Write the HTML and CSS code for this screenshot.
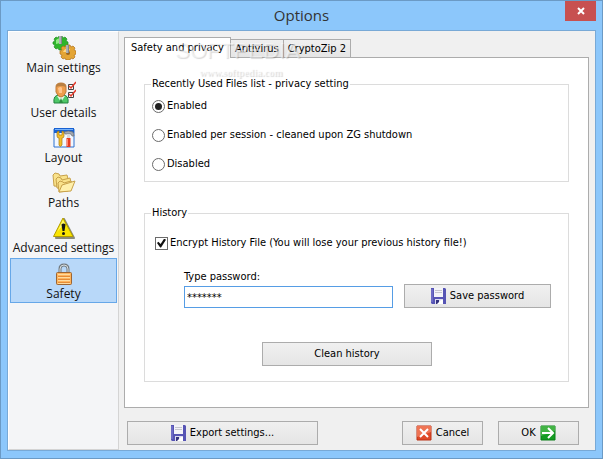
FILE: index.html
```html
<!DOCTYPE html>
<html lang="en">
<head>
    <meta charset="UTF-8">
    <meta name="viewport" content="width=device-width, initial-scale=1.0">
    <title>Options</title>
    <link rel="stylesheet" href="styles.css">
</head>
<body>
    <svg class="symbols" aria-hidden="true">
        <symbol id="floppy" viewBox="0 0 15 16">
            <path d="M0 0h14l1 1v15H1l-1-1z" fill="#5654b4"/>
            <path d="M1 1v13" stroke="#8583d6"/>
            <path d="M3 0h9v9H3z" fill="#f3f3f8"/>
            <path d="M4 2h7v1H4zM4 4h7v1H4z" fill="#c5c5cf"/>
            <path d="M4 11h8v5H4z" fill="#dcdcf0"/>
            <path d="M5 12h3v4H5z" fill="#34327f"/>
            <path d="M6 16l4-4h2v4z" fill="#fff"/>
        </symbol>
    </svg>

    <div class="window">
        <header class="titlebar">
            <h1>Options</h1>
            <button type="button" class="close" aria-label="Close">
                <svg width="8" height="8" viewBox="0 0 8 8"><path d="M1 1l6 6M7 1L1 7" stroke="#fff" stroke-width="2"/></svg>
            </button>
        </header>

        <div class="client">
            <nav class="sidebar">
                <a href="#main">
                    <svg width="24" height="24" viewBox="0 0 24 24">
                        <path d="M7 0h3l1 2 2-1 2 2-1 2 2 1v3l-2 1 1 2-2 2-2-1-1 1H7l-1-2-2 1-2-2 1-2-2-1V6l2-1-1-2 2-2 2 1z" fill="#2eb52b" stroke="#218c22" stroke-width=".7"/>
                        <path d="M4 4q3-3 5-1l-1 4-4 1z" fill="#90eb83"/>
                        <path d="M7 0h3v8H7z" fill="#85878b"/>
                        <path d="M8 0v8" stroke="#d8dade"/>
                        <path d="M14 9h4l1 2 2-1 2 2-1 2 2 1v3l-2 1 1 2-2 2-2-1-1 2h-4l-1-2-2 1-2-2 1-2-2-1v-3l2-1-1-2 2-2 2 1z" fill="#e4a535" stroke="#af701a" stroke-width=".7"/>
                        <path d="M11 16q2-5 7-3l-2 3z" fill="#ffd782"/>
                        <circle cx="16" cy="17" r="2" fill="#98641f"/>
                        <path d="M14 9h3v8h-3z" fill="#85878b"/>
                        <path d="M15 9v8" stroke="#d8dade"/>
                    </svg>
                    <span>Main settings</span>
                </a>
                <a href="#user">
                    <svg width="24" height="24" viewBox="0 0 24 24">
                        <path d="M2 22q-1-8 5-8h4q6 0 5 8z" fill="#4fc868" stroke="#248340"/>
                        <path d="M5 15l4 6 4-6z" fill="#e2f6e3"/>
                        <path d="M9 17l2 5H7z" fill="#2b8d40"/>
                        <path d="M4 6q0-4 5-4t5 4v5q-2 5-5 5t-5-5z" fill="#ee9d4c" stroke="#c07b3a"/>
                        <path d="M4 6q0-4 5-4t5 4q-5-2-10 0z" fill="#b98043"/>
                        <path d="M6 7q3-2 4 0v5H7z" fill="#ffc48b"/>
                        <path d="M16.500 3.500h5v5h-5zM16.500 11.500h5v5h-5z" fill="#fff" stroke="#444"/>
                        <path d="M17 5l2 2 5-6M17 13l2 2 5-6" fill="none" stroke="#e33a2b" stroke-width="1.500"/>
                    </svg>
                    <span>User details</span>
                </a>
                <a href="#layout">
                    <svg width="24" height="24" viewBox="0 0 24 24">
                        <path d="M2 3h20v18H2z" fill="#f1f7ff" stroke="#2d70d0"/>
                        <path d="M2 2h20v5H2z" fill="#1761d2"/>
                        <path d="M3 3.500h18" stroke="#77b2fa"/>
                        <path d="M5 6v4q0 2 2 2v7q1 3 3 0v-7q2 0 2-2V6l-2-1v4H7V5z" fill="#f4bd28" stroke="#a47815" stroke-width=".7"/>
                        <path d="M12 6q4-2 9 0l1 4h-2l-1-2h-6z" fill="#a4a9b1" stroke="#676b74" stroke-width=".7"/>
                        <path d="M15 8h3v4h-3z" fill="#d7dade"/>
                        <path d="M14.500 12h4v9h-4z" fill="#e63b20"/>
                        <path d="M15.500 13v7" stroke="#ff8b72"/>
                    </svg>
                    <span>Layout</span>
                </a>
                <a href="#paths">
                    <svg width="24" height="24" viewBox="0 0 24 24" fill="#f9e28b" stroke="#c7a14a">
                        <path d="M2 15L1 4l2-2 4 1 1 2 7-1 1 4-3 8z"/>
                        <path d="M5 17l-1-9 2-2 3 1 1 2 8-2 1 4-3 8z"/>
                        <path d="M7 21L6 12l2-2 3 1 1 1 7-2 1 2-4 8z"/>
                        <path d="M7 21l3-7 13-4-4 10z" fill="#fff0ab"/>
                    </svg>
                    <span>Paths</span>
                </a>
                <a href="#advanced">
                    <svg width="24" height="24" viewBox="0 0 24 24">
                        <path d="M12 3l10 19H4z" fill="#8b8b78" stroke="#8b8b78" stroke-width="2" stroke-linejoin="round"/>
                        <path d="M11 2l10 18.500H1.500z" fill="#fae500" stroke="#b39d00" stroke-linejoin="round"/>
                        <path d="M11 4L5 16q4-5 8-8z" fill="#fff873"/>
                        <path d="M9.500 8.500q2-2 4 0L12.500 15h-2z" fill="#171713"/>
                        <circle cx="11.500" cy="17.500" r="1.500" fill="#171713"/>
                    </svg>
                    <span>Advanced settings</span>
                </a>
                <a href="#safety" class="selected" aria-current="page">
                    <svg width="24" height="24" viewBox="0 0 24 24">
                        <path d="M8 12V7q0-4 4-4t4 4v5" fill="none" stroke="#737b80" stroke-width="3"/>
                        <path d="M8 12V7q0-4 4-4t4 4v5" fill="none" stroke="#d8dee1"/>
                        <rect x="4.500" y="10.500" width="15" height="12" rx="1" fill="#ffb45c" stroke="#9b6534"/>
                        <path d="M6 12.500h12M6 15.500h12M6 18.500h12M6 21.500h12" stroke="#ffdb9e"/>
                        <path d="M6 14.500h12M6 17.500h12M6 20.500h12" stroke="#e58b36"/>
                    </svg>
                    <span>Safety</span>
                </a>
            </nav>

            <main class="content">
                <div class="tabs" role="tablist">
                    <button type="button" role="tab" class="tab active" aria-selected="true">Safety and privacy</button>
                    <button type="button" role="tab" class="tab">Antivirus</button>
                    <button type="button" role="tab" class="tab">CryptoZip 2</button>
                </div>

                <section class="panel">
                    <fieldset class="recent">
                        <legend>Recently Used Files list - privacy setting</legend>
                        <label><input type="radio" name="recent" checked>Enabled</label>
                        <label><input type="radio" name="recent">Enabled per session - cleaned upon ZG shutdown</label>
                        <label><input type="radio" name="recent">Disabled</label>
                    </fieldset>

                    <fieldset class="history">
                        <legend>History</legend>
                        <label class="encrypt"><input type="checkbox" checked>Encrypt History File (You will lose your previous history file!)</label>
                        <div class="password">
                            <div class="field">
                                <label for="password">Type password:</label>
                                <input type="text" id="password" value="*******">
                            </div>
                            <button type="button" class="btn"><svg width="15" height="16"><use href="#floppy"/></svg>Save password</button>
                        </div>
                        <button type="button" class="btn clean">Clean history</button>
                    </fieldset>
                </section>

                <footer class="actions">
                    <button type="button" class="btn export"><svg width="15" height="16"><use href="#floppy"/></svg>Export settings...</button>
                    <button type="button" class="btn">
                        <svg width="16" height="16" viewBox="0 0 16 16">
                            <path d="M1 1h14v14H1z" fill="#df4927" stroke="#bc3316"/>
                            <path d="M1 1h14v6L1 12z" fill="#ee7454"/>
                            <path d="M4 4l8 8M12 4l-8 8" stroke="#fff" stroke-width="2"/>
                        </svg>Cancel
                    </button>
                    <button type="button" class="btn">OK
                        <svg width="16" height="16" viewBox="0 0 16 16">
                            <path d="M1 1h14v14H1z" fill="#159c22" stroke="#0b7f19"/>
                            <path d="M1 1h14v5L1 11z" fill="#42b344"/>
                            <path d="M2 8h10M8 3l5 5-5 5" fill="none" stroke="#fff" stroke-width="2"/>
                        </svg>
                    </button>
                </footer>

                <div class="watermark" aria-hidden="true">
                    <div class="brand">SOFTPEDIA<sup>™</sup></div>
                    <div class="site">www.softpedia.com</div>
                </div>
            </main>
        </div>
    </div>
</body>
</html>
```

FILE: styles.css
```css
* {
    box-sizing: border-box;
}

body {
    margin: 0;
    font-family: "DejaVu Sans Condensed", "Open Sans", sans-serif;
    font-size: 11px;
    line-height: 14px;
    color: #000;
}

button,
input {
    font: inherit;
    color: inherit;
}

.symbols {
    display: none;
}

.window {
    display: flex;
    flex-direction: column;
    min-height: 100vh;
    padding: 0 6px 7px;
    border: 1px solid #6b9ac5;
    background-color: #8cc7fb;
}

.titlebar {
    display: grid;
    grid-template-columns: 1fr auto 1fr;
    align-items: start;
    height: 29px;
}

.titlebar h1 {
    grid-column: 2;
    margin: 0;
    font-family: "Open Sans", sans-serif;
    font-size: 15px;
    font-weight: normal;
    line-height: 29px;
    color: #333;
}

.close {
    display: flex;
    justify-content: center;
    align-items: center;
    justify-self: end;
    width: 31px;
    height: 20px;
    padding: 0;
    border: 0;
    background-color: #c75050;
}

.client {
    display: flex;
    flex: 1;
    border: 1px solid #78a9d6;
    background-color: #f0f0f0;
}

.sidebar {
    display: flex;
    flex-direction: column;
    width: 111px;
    padding: 4px 1px 0;
    border: 1px solid #fff;
    border-right-color: #d4d4d4;
    border-bottom-color: #d4d4d4;
    background-color: #f4f5f7;
}

.sidebar a {
    display: flex;
    flex-direction: column;
    align-items: center;
    height: 45px;
    font-family: "Open Sans", sans-serif;
    font-size: 12px;
    line-height: 16px;
    white-space: nowrap;
    color: #111;
    text-decoration: none;
}

.sidebar .selected {
    height: 45px;
    margin-top: -3px;
    padding-top: 3px;
    border: 1px solid #66a7e8;
    background-color: #b8d8f9;
}

.content {
    position: relative;
    display: flex;
    flex: 1;
    flex-direction: column;
    padding: 6px 6px 0 5px;
}

.tabs {
    display: flex;
    align-items: flex-end;
}

.tab {
    height: 18px;
    padding: 0 4px;
    border: 1px solid #acacac;
    border-left-width: 0;
    border-bottom: 0;
    background: linear-gradient(#f0f0f0, #e5e5e5);
}

.tab.active {
    z-index: 1;
    height: 21px;
    margin-bottom: -1px;
    padding: 0 6px;
    border-left-width: 1px;
    background: #fff;
}

.panel {
    flex: 1;
    padding: 19px 19px 0;
    border: 1px solid #acacac;
    background-color: #fff;
}

fieldset {
    display: flex;
    flex-direction: column;
    min-width: 0;
    margin: 0;
    border: 1px solid #dcdcdc;
}

legend {
    padding: 0 1px;
}

fieldset label {
    display: flex;
    align-items: center;
}

.recent {
    gap: 15px;
    padding: 8px 6px 10px;
}

.recent label {
    padding-left: 1px;
}

.history {
    margin-top: 24px;
    padding: 16px 17px 15px 6px;
}

.encrypt {
    padding-left: 4px;
}

input[type="radio"],
input[type="checkbox"] {
    display: grid;
    place-content: center;
    appearance: none;
    width: 13px;
    height: 13px;
    margin: 0 2px 0 0;
    border: 1px solid #6b6b6b;
    background-color: #fff;
}

input[type="radio"] {
    border-radius: 50%;
}

input[type="radio"]:checked::before {
    content: "";
    width: 7px;
    height: 7px;
    border-radius: 50%;
    background-color: #222;
}

input[type="checkbox"]:checked::before {
    content: "";
    width: 9px;
    height: 9px;
    background-color: #111;
    clip-path: polygon(0 50%, 15% 35%, 40% 60%, 80% 0, 100% 15%, 45% 100%, 35% 100%);
}

.password {
    display: flex;
    align-items: flex-end;
    gap: 11px;
    margin-top: 20px;
    padding-left: 33px;
}

.field {
    flex: 1;
}

.field input {
    display: block;
    width: 100%;
    height: 22px;
    margin-top: 2px;
    padding: 0 2px;
    border: 1px solid #569de5;
    background-color: #fff;
}

.btn {
    display: flex;
    justify-content: center;
    align-items: center;
    gap: 4px;
    height: 24px;
    border: 1px solid #acacac;
    background: linear-gradient(#f0f0f0, #e5e5e5);
}

.password .btn {
    width: 147px;
}

.clean {
    align-self: center;
    width: 170px;
    margin: 34px 8px 0 0;
}

.actions {
    display: flex;
    gap: 15px;
    padding: 13px 10px 5px 3px;
}

.actions .btn {
    width: 81px;
}

.actions .export {
    width: 191px;
    margin-right: auto;
}

/* faint logo printed over the tabs */
.watermark {
    position: absolute;
    z-index: 2;
    top: 7px;
    left: 56px;
    pointer-events: none;
    text-align: center;
    color: rgba(255, 255, 255, 0.5);
    text-shadow: 1px 1px 1px rgba(0, 0, 0, 0.15);
}

.brand {
    font-family: "Liberation Sans", sans-serif;
    font-size: 22px;
    line-height: 26px;
}

.brand sup {
    font-size: 7px;
    vertical-align: 9px;
    line-height: 7px;
}

.site {
    font-family: "Liberation Serif", serif;
    font-size: 10px;
    font-weight: bold;
    line-height: 18px;
}
```
